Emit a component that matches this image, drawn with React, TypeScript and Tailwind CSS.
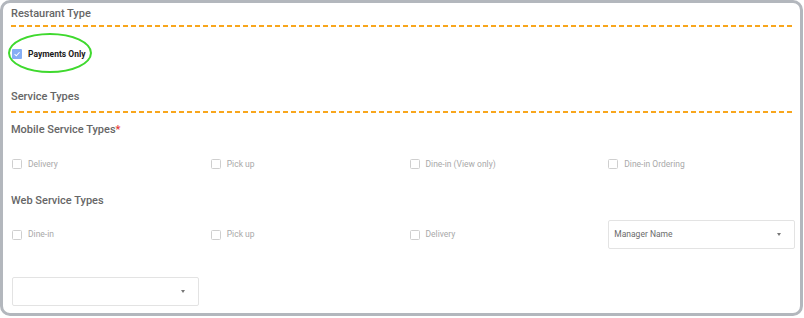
import React from 'react';

const dash =
    'h-[2px] w-full bg-[linear-gradient(to_right,#f8a61c_5px,transparent_5px)] bg-[length:8px_2px] bg-repeat-x';

const Box = ({ checked = false }: { checked?: boolean }) =>
    checked ? (
        <span className="flex h-[10px] w-[10px] items-center justify-center rounded-[1px] bg-[#86aef5]">
            <svg viewBox="0 0 10 10" className="h-[8px] w-[8px]">
                <path d="M2 5.2 L4.1 7.2 L8.2 2.8" fill="none" stroke="#fff" strokeWidth="1.3" />
            </svg>
        </span>
    ) : (
        <span className="h-[10px] w-[10px] rounded-[1.5px] border border-[#cfcfcf] bg-white" />
    );

const Option = ({ label }: { label: string }) => (
    <label className="flex h-[12px] items-center gap-[6px]">
        <Box />
        <span className="text-[8.5px] leading-none text-[#a9a9a9]">{label}</span>
    </label>
);

const Select = ({ placeholder }: { placeholder?: string }) => (
    <div className="flex h-[29px] items-center justify-between rounded-[2px] border border-[#e3e3e3] bg-white pl-[5px] pr-[13px]">
        <span className="text-[8.5px] text-[#6b6b6b]">{placeholder}</span>
        <span className="h-0 w-0 border-x-[2.5px] border-t-[3px] border-x-transparent border-t-[#777]" />
    </div>
);

const Heading = ({ children }: { children: React.ReactNode }) => (
    <h2 className="h-[14px] text-[11px] font-medium leading-[14px] text-[#666666]">{children}</h2>
);

export default function App() {
    return (
        <div className="h-[318px] w-[804px] bg-white font-['Roboto',sans-serif]">
            <div className="relative h-[316px] w-[803px] rounded-[10px] border-[3px] border-[#b3b7bd] pl-[8px] pr-[5px] pt-[4px]">
                <Heading>Restaurant Type</Heading>
                <div className={`mt-[4px] ${dash}`} />

                <label className="mt-[21px] flex h-[12px] items-center gap-[6px] pl-[1px]">
                    <Box checked />
                    <span className="text-[8.5px] font-bold leading-none text-[#1a1a1a]">Payments Only</span>
                </label>

                <div className="mt-[30px]">
                    <Heading>Service Types</Heading>
                </div>
                <div className={`mt-[7px] ${dash}`} />

                <div className="mt-[10px]">
                    <Heading>
                        Mobile Service Types<span className="text-[#e53935]">*</span>
                    </Heading>
                </div>

                <div className="mt-[21px] grid grid-cols-4 gap-x-[12px] pl-[1px]">
                    <Option label="Delivery" />
                    <Option label="Pick up" />
                    <Option label="Dine-in (View only)" />
                    <Option label="Dine-in Ordering" />
                </div>

                <div className="mt-[24px]">
                    <Heading>Web Service Types</Heading>
                </div>

                <div className="mt-[12px] grid grid-cols-4 items-center gap-x-[12px] pl-[1px]">
                    <Option label="Dine-in" />
                    <Option label="Pick up" />
                    <Option label="Delivery" />
                    <Select placeholder="Manager Name" />
                </div>

                <div className="mt-[28px] grid grid-cols-4 gap-x-[12px] pl-[1px]">
                    <Select />
                </div>

                <div className="pointer-events-none absolute left-[5px] top-[30px] h-[40px] w-[84px] rounded-[50%] border-2 border-[#3fd92e]" />
            </div>
        </div>
    );
}
